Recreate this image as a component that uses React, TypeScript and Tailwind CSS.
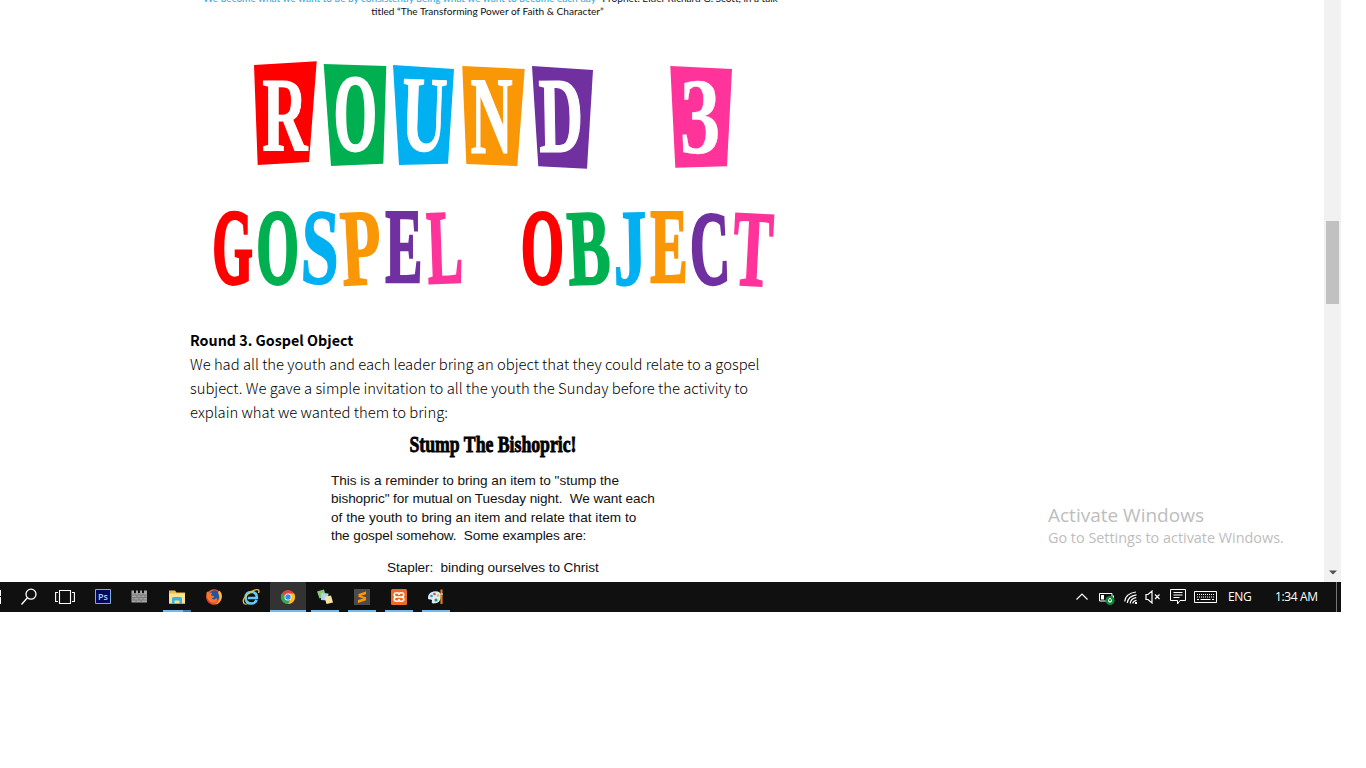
import React from "react";

type Glyph = {
  ch: string;
  fill: string;
  box: [number, number, number, number];
  em: [number, number, number, number];
  tilt?: number;
  stroke?: number;
};

const RED = "#ff0000";
const GREEN = "#00b050";
const BLUE = "#00b0f0";
const ORANGE = "#f99707";
const PURPLE = "#7030a0";
const PINK = "#ff3399";

const cards: { points: string; fill: string }[] = [
  { points: "254,65 316.7,61.3 309,162 257.7,165", fill: RED },
  { points: "323.7,64 386.3,66 383.3,163.7 331,166", fill: GREEN },
  { points: "393,65 454,69 448,163.7 399,165", fill: BLUE },
  { points: "462.3,66 524.7,69 517.3,166 466.3,164", fill: ORANGE },
  { points: "532,66 593,70 587,168.7 538.3,166.3", fill: PURPLE },
  { points: "670.3,66 732,69 727,166.3 675.3,167.7", fill: PINK },
];

// box: drawn extent on the banner; em: glyph extent in 1/1000 em (left, right, bottom, top)
const roundLetters: Glyph[] = [
  { ch: "R", fill: "#fff", box: [263.3, 307.5, 79, 150], em: [26, 715, 0, 660], stroke: 1 },
  { ch: "O", fill: "#fff", box: [334.5, 376, 76.7, 152.7], em: [35, 743, -15, 675] },
  { ch: "U", fill: "#fff", box: [402, 446, 79, 152.7], em: [16, 701, -15, 660], tilt: 2, stroke: 1 },
  { ch: "N", fill: "#fff", box: [471, 512, 80, 153], em: [16, 701, 0, 660], tilt: 0, stroke: 1 },
  { ch: "D", fill: "#fff", box: [539, 581.3, 80, 152], em: [14, 685, 0, 660], tilt: -1, stroke: 1.4 },
  { ch: "3", fill: "#fff", box: [681.7, 717.3, 80, 155], em: [25, 458, -14, 675], stroke: 0.3 },
];

const gospelLetters: Glyph[] = [
  { ch: "G", fill: RED, box: [213, 253, 210.5, 286], em: [37, 755, -15, 675], stroke: 3 },
  { ch: "O", fill: GREEN, box: [257, 298.5, 210, 286.5], em: [35, 743, -15, 675], stroke: 3 },
  { ch: "S", fill: BLUE, box: [303, 337, 210, 285.5], em: [35, 513, -15, 675], tilt: 2, stroke: 1.4 },
  { ch: "P", fill: ORANGE, box: [341, 381, 211.5, 285], em: [16, 600, 0, 660], tilt: -3, stroke: 1.6 },
  { ch: "E", fill: PURPLE, box: [385, 422, 212, 283.5], em: [16, 641, 0, 660], stroke: 2.2 },
  { ch: "L", fill: PINK, box: [427, 462, 212, 283.5], em: [19, 638, 0, 660], tilt: -2, stroke: 2.2 },
];

const objectLetters: Glyph[] = [
  { ch: "O", fill: RED, box: [521.5, 563.5, 210, 286.5], em: [35, 743, -15, 675], stroke: 3 },
  { ch: "B", fill: GREEN, box: [567.5, 608, 212, 285], em: [16, 619, 0, 660], tilt: -2.5, stroke: 2 },
  { ch: "J", fill: BLUE, box: [612.7, 646, 212, 287], em: [3, 478, -15, 660], tilt: -1, stroke: 1.6 },
  { ch: "E", fill: ORANGE, box: [650, 687.3, 212, 283.5], em: [16, 641, 0, 660], stroke: 2.2 },
  { ch: "C", fill: PURPLE, box: [691.5, 729, 212, 286.5], em: [49, 687, -15, 675], tilt: -2, stroke: 2.6 },
  { ch: "T", fill: PINK, box: [734, 772, 213, 286], em: [31, 636, 0, 660], tilt: 3, stroke: 2 },
];

function Letter({ g }: { g: Glyph }) {
  const sw = g.stroke ?? 2.2;
  const h = sw / 2;
  const [x0, x1, y0, y1] = [g.box[0] + h, g.box[1] - h, g.box[2] + h, g.box[3] - h];
  const [l, r, b, t] = g.em;
  const sx = (x1 - x0) / ((r - l) / 10);
  const sy = (y1 - y0) / ((t - b) / 10);
  const tx = x0 - (l / 10) * sx;
  const ty = y1 + (b / 10) * sy;
  const cx = (x0 + x1) / 2;
  const cy = (y0 + y1) / 2;
  return (
    <g transform={`rotate(${g.tilt ?? 0} ${cx} ${cy})`}>
      <text
        transform={`matrix(${sx} 0 0 ${sy} ${tx} ${ty})`}
        fontSize="100"
        fill={g.fill}
        stroke={g.fill}
        strokeWidth={sw}
        strokeLinejoin="miter"
        vectorEffect="non-scaling-stroke"
      >
        {g.ch}
      </text>
    </g>
  );
}

function Banner() {
  return (
    <svg
      width="603"
      height="260"
      viewBox="190 40 603 260"
      className="block shrink-0 overflow-visible font-['Liberation_Serif',serif] font-bold"
      role="img"
      aria-label="Round 3 Gospel Object"
    >
      {cards.map((c) => (
        <polygon key={c.points} points={c.points} fill={c.fill} />
      ))}
      {[...roundLetters, ...gospelLetters, ...objectLetters].map((g, i) => (
        <Letter key={i} g={g} />
      ))}
    </svg>
  );
}

function Caption() {
  return (
    <div className="flex h-10 shrink-0 flex-col items-center overflow-hidden whitespace-pre font-['Lato',sans-serif] text-[10.1px] leading-3 text-[#111]">
      <p className="-mt-2 mr-[6px] tracking-[-0.01px]">
        <span className="text-[#1ba9e0]">“We become what we want to be by consistently being what we want to become each day”</span>
        {" "}Prophet. Elder Richard G. Scott, in a talk
      </p>
      <p className="mr-2 mt-px">titled “The Transforming Power of Faith &amp; Character”</p>
    </div>
  );
}

function Article() {
  return (
    <div className="ml-[190px] flex w-[603px] shrink-0 flex-col">
      <Caption />
      <Banner />
      <div className="mt-7 whitespace-nowrap font-['Noto_Sans_CJK_JP',sans-serif] text-[14.8px] leading-6 text-black">
        <h2 className="text-[14.3px] font-bold leading-6">Round 3. Gospel Object</h2>
        <p className="font-light">We had all the youth and each leader bring an object that they could relate to a gospel</p>
        <p className="font-light">subject. We gave a simple invitation to all the youth the Sunday before the activity to</p>
        <p className="font-light">explain what we wanted them to bring:</p>
      </div>
      <svg width="170" height="32" viewBox="0 0 170 32" className="ml-[218px] mt-1 block overflow-visible font-['Liberation_Serif',serif] font-bold">
        <text x="1.5" y="24" fontSize="24" textLength="167" lengthAdjust="spacingAndGlyphs" fill="#000" stroke="#000" strokeWidth="0.9">
          Stump The Bishopric!
        </text>
      </svg>
      <div className="ml-[141px] mt-[11.6px] whitespace-pre font-['Liberation_Sans',sans-serif] text-[13.6px] leading-[18.5px] tracking-[-0.08px] text-[#111]">
        <p className="tracking-[-0.02px]">This is a reminder to bring an item to "stump the</p>
        <p>bishopric" for mutual on Tuesday night.  We want each</p>
        <p className="tracking-[0.03px]">of the youth to bring an item and relate that item to</p>
        <p className="tracking-[-0.12px]">the gospel somehow.  Some examples are:</p>
        <p className="ml-14 mt-[13px]">Stapler:  binding ourselves to Christ</p>
      </div>
    </div>
  );
}

function Scrollbar() {
  return (
    <div className="flex w-[17px] shrink-0 flex-col items-center bg-[#f1f1f1]">
      <div className="mt-[221px] h-[83px] w-[13px] bg-[#c1c1c1]" />
      <svg width="8" height="5" viewBox="0 0 8 5" className="mb-[7px] mt-auto">
        <path d="M0 .5h8L4 4.5z" fill="#505050" />
      </svg>
    </div>
  );
}

function AppSlot({ children, state = "idle" }: { children: React.ReactNode; state?: "idle" | "open" | "active" | "group" }) {
  return (
    <div className={state === "active" ? "flex h-[30px] w-9 flex-col items-center bg-[#333]" : "flex h-[30px] w-9 flex-col items-center"}>
      <div className="flex h-7 items-center pt-0.5">{children}</div>
      {state === "open" && <div className="h-0.5 w-7 bg-[#76b9ed]" />}
      {state === "active" && <div className="h-0.5 w-9 bg-[#76b9ed]" />}
      {state === "group" && (
        <div className="flex h-0.5 w-7 bg-[#76b9ed]">
          <div className="ml-auto h-0.5 w-2 bg-[#4a7ba3]" />
        </div>
      )}
    </div>
  );
}

const ic = { width: 18, height: 18, viewBox: "0 0 18 18", fill: "none" };

function Taskbar() {
  return (
    <div className="flex h-[30px] w-[1341px] items-center bg-[#101010] text-white">
      <svg width="11" height="30" viewBox="0 0 11 30">
        <path d="M0 8h1v6H0zM0 15h1v7H0z" fill="#fff" />
      </svg>
      <div className="flex gap-px">
        <AppSlot>
          <svg {...ic} stroke="#fff" strokeWidth="1.3">
            <circle cx="11" cy="6.2" r="5" />
            <path d="M7.4 9.8 1.5 16.5" />
          </svg>
        </AppSlot>
        <AppSlot>
          <svg width="20" height="18" viewBox="0 0 20 18" fill="none" stroke="#fff" strokeWidth="1.1" className="mr-0.5">
            <path d="M4.5 2.5h11v13h-11zM3 4.5H.6v9H3M17 4.5h2.4v9H17" />
          </svg>
        </AppSlot>
        <AppSlot>
          <svg {...ic}>
            <path d="M1.5 1.5h15v14h-15z" fill="#03095a" stroke="#75aee8" />
            <text x="4" y="12" fontSize="9" fill="#a5d0fa" className="font-['Open_Sans',sans-serif] font-semibold">Ps</text>
          </svg>
        </AppSlot>
        <AppSlot>
          <svg {...ic} className="mr-0.5">
            <path d="M1.5 2.5H4V5h2V2.500h2V5h2V2.500h2V5h2V2.500h3v12H1.500z" fill="#a5a5a5" />
            <path d="M2 7h15M2 9.500h15M2 12h15M5 5v2M9 5v2M13 5v2M7 7v2.500M11 7v2.500M15 7v2.500M4 9.500V12M9 9.500V12M13 9.500V12M6 12v2.500M11 12v2.500" stroke="#686868" strokeWidth=".7" />
          </svg>
        </AppSlot>
        <AppSlot state="group">
          <svg {...ic}>
            <path d="M1 2.500h6l1.500 2H17v11H1z" fill="#e9bd54" />
            <path d="M1 5.500h16v10H1z" fill="#fde28d" />
            <path d="M4 16V10.500Q4 9 5.500 9h7Q14 9 14 10.500V16h-2.500v-3.500h-5V16z" fill="#35b4e8" />
          </svg>
        </AppSlot>
        <AppSlot>
          <svg {...ic}>
            <circle cx="9" cy="9" r="7.700" fill="#ed5a20" />
            <circle cx="9.500" cy="7.500" r="5.300" fill="#2353a5" />
            <path d="M14.500 2.500q3.500 4 1.800 8.500Q14 16.700 9 16.700q2 0 4-2.500 2.800-4.500 0-9.500z" fill="#ffbd2f" />
            <path d="M1.500 4.500 3 3.500l1 1.300h3L6 7.500l3 .5q0 2-2.500 2.500Q9 12.500 12 10q.500 5-4.500 4.500Q1.500 13.500 1.500 9z" fill="#f7782b" />
            <path d="M1.400 8q-.5 8 7.500 8.700Q3 14 1.400 8z" fill="#d92b4d" />
          </svg>
        </AppSlot>
        <AppSlot>
          <svg {...ic}>
            <path d="M14.700 12q-1.500 3.500-5.500 3.500-5.500 0-5.500-6 0-5.500 5.500-5.500 5.700 0 5.700 6H6" stroke="#65c8f2" strokeWidth="2.600" />
            <path d="M2.500 16Q-1 12 5.500 6.500 14 0 16.500 2q1 1 0 3" stroke="#efc438" strokeWidth="1.300" />
            <path d="M2.500 16q2 .7 4-.8" stroke="#efc438" />
          </svg>
        </AppSlot>
        <AppSlot state="active">
          <svg {...ic}>
            <circle cx="9" cy="9" r="7" fill="#e54335" />
            <path d="M2.900 5.500A7 7 0 0 0 9 16l3-5.200-3-1.300z" fill="#35a853" />
            <path d="M9 16a7 7 0 0 0 6.100-10.500H9l3 5.200z" fill="#fbc116" />
            <circle cx="9" cy="9" r="3.500" fill="#fff" />
            <circle cx="9" cy="9" r="2.700" fill="#4385f5" />
          </svg>
        </AppSlot>
        <AppSlot state="open">
          <svg {...ic}>
            <path d="m1 3.500 7-2 2 7-6.500 2z" fill="#8cc875" />
            <path d="m5.500 5 7 .5-.5 7-7-.5z" fill="#a5d8f2" />
            <path d="m8.500 9 6.500-1.500 2 7L10.500 16z" fill="#fae69a" />
          </svg>
        </AppSlot>
        <AppSlot state="open">
          <svg {...ic}>
            <path d="M1 1h16v16H1z" fill="#4b4b4b" />
            <path d="M13 3.500 5.500 6v3l5 1.500L5 12v3l8-2.700V9.300L8 7.800l5-1.500z" fill="#ff9800" />
          </svg>
        </AppSlot>
        <AppSlot state="open">
          <svg {...ic}>
            <rect x="1" y="1" width="16" height="16" rx="1.500" fill="#eb6c20" />
            <path d="M6.500 4.700Q9 4.500 9 7q0-2.500 2.500-2.300 2.300.1 2.300 2.100T11.500 9q2.300.2 2.300 2.200t-2.300 2.100Q9 13.500 9 11q0 2.500-2.500 2.300-2.300-.1-2.300-2.100T6.500 9q-2.300-.2-2.300-2.200t2.300-2.100zM6.500 9h5" stroke="#fff" strokeWidth="1.500" />
          </svg>
        </AppSlot>
        <AppSlot state="open">
          <svg {...ic}>
            <path d="M6.500 3.500Q14 2.500 14 8.500q0 6.500-7.500 7-2.500 0-1.500-2.500.5-2-2-1.500-2.500.3-2-2.500Q1.500 4.500 6.500 3.500z" fill="#d7edf8" />
            <circle cx="4.500" cy="8" r="1.300" fill="#3a8ad8" />
            <circle cx="7.500" cy="6" r="1.300" fill="#e04c38" />
            <circle cx="11" cy="7.500" r="1.300" fill="#e8bd33" />
            <circle cx="9" cy="12" r="1.500" fill="#338b3b" />
            <path d="M14.500 16V6M14.500 5.500V1.500" stroke="#d77928" strokeWidth="2.200" />
            <path d="M13.300 6h2.500" stroke="#d8d8d8" strokeWidth="1.500" />
          </svg>
        </AppSlot>
      </div>
      <div className="ml-auto flex h-[30px] items-center font-['Open_Sans',sans-serif] text-xs">
        <svg width="12" height="18" viewBox="0 0 12 18" className="mr-[11px]" fill="none" stroke="#fff" strokeWidth="1.200">
          <path d="m.5 11.500 5.500-5.500 5.500 5.500" />
        </svg>
        <svg width="16" height="18" viewBox="0 0 16 18" className="mr-[9px] overflow-visible" fill="none">
          <path d="M.5 5.500h12.500v7.500H.5zM14.500 7.500v3" stroke="#fff" />
          <path d="M2 7h3v4.500H2z" fill="#fff" />
          <circle cx="11" cy="12.500" r="4.500" fill="#12873c" />
          <path d="M11 10q-2 2-1.500 3.500h3Q13 12 11 10zM11 13v2" stroke="#fff" strokeWidth=".9" />
        </svg>
        <svg width="13" height="18" viewBox="0 0 13 18" className="mr-2" fill="none" stroke="#fff" strokeWidth="1.200">
          <path d="M.7 13.500Q1.500 5.500 12 4M3.300 15Q4 8 12.500 6.800M6.200 15.500q.5-5 6-5.800M8.800 15.500q.3-2.800 3.700-3.200" />
          <path d="M11 14h2v2h-2z" fill="#fff" stroke="none" />
        </svg>
        <svg width="16" height="18" viewBox="0 0 16 18" className="mr-[9px]" fill="none" stroke="#fff" strokeWidth="1.200">
          <path d="M1 6.500h2L7 3v12l-4-3.500H1zM10 6.500l4.500 4.500M14.500 6.500 10 11" />
        </svg>
        <svg width="16" height="18" viewBox="0 0 16 18" className="mr-2" fill="none" stroke="#fff">
          <path d="M.5 1.500h15v11H10L7.500 16v-3.500h-7zM3.500 4.500h9M3.500 7h9M3.500 9.500h6" />
        </svg>
        <svg width="23" height="18" viewBox="0 0 23 18" className="mr-[11px]" fill="none" stroke="#fff">
          <path d="M.5 3.500h22v11H.5z" />
          <path d="M3 6.500h17M3 9h17" strokeDasharray="1 1" />
          <path d="M3 11.500h2M6.500 11.500h10M18 11.500h2" />
        </svg>
        <span className="w-[47px] tracking-[-0.3px]">ENG</span>
        <span className="w-[61px] whitespace-nowrap pb-px tracking-[-0.35px]">1:34 AM</span>
        <div className="mr-1 h-[30px] w-px bg-[#777]" />
      </div>
    </div>
  );
}

export default function App() {
  return (
    <div className="h-[768px] w-[1366px] overflow-hidden bg-white">
      <div className="relative flex h-[582px] w-[1341px] overflow-hidden">
        <main className="flex flex-1 items-start overflow-hidden">
          <Article />
        </main>
        <Scrollbar />
        <div className="absolute left-[1048px] top-[502px] whitespace-nowrap font-['Open_Sans',sans-serif] text-[#bdbdbd]">
          <p className="text-[19px] leading-[26px]">Activate Windows</p>
          <p className="text-[14.4px] leading-5">Go to Settings to activate Windows.</p>
        </div>
      </div>
      <Taskbar />
    </div>
  );
}
